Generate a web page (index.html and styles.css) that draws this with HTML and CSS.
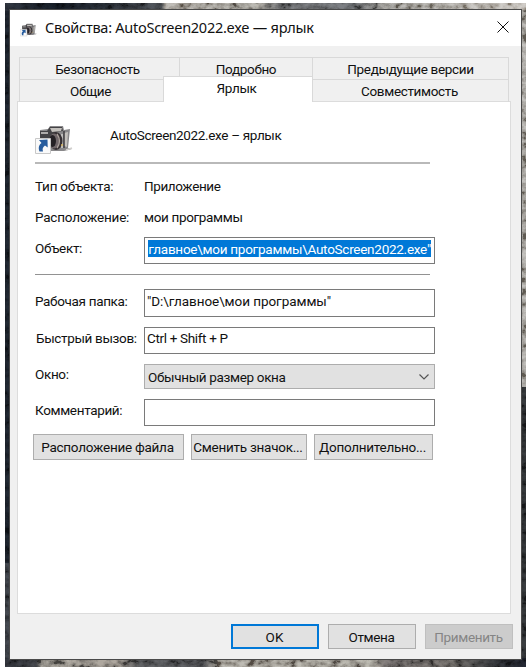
FILE: index.html
```html
<!DOCTYPE html>
<html lang="ru">
<head>
<meta charset="utf-8">
<title>Свойства: AutoScreen2022.exe — ярлык</title>
<link rel="stylesheet" href="styles.css">
</head>
<body>
<svg width="0" height="0" class="defs">
  <defs>
    <symbol id="camera" viewBox="0 0 38 30">
      <path d="M5 5 13 4 15 1h13l1 4 6-1-2 19 4 1-8 2H12L5 20z" fill="#89888a"/>
      <path d="M5 6h7l3-4h12l1 4-7 1-2 15H9L5 18z" fill="#444346"/>
      <path d="M15 3h12l-1 3-9 1zM29 8l4-1-1 15-3-1z" fill="#c3c0bc"/>
      <path d="M6 8h7M27 9v14M31 25l6-2" stroke="#d1cfcd" stroke-width="1.5"/>
      <ellipse cx="21" cy="16" rx="6.5" ry="9" fill="#363033"/>
      <ellipse cx="19" cy="16" rx="5" ry="7.500" fill="#70676a"/>
      <ellipse cx="17.500" cy="16" rx="3.500" ry="6" fill="#242125"/>
      <path d="M22 9q5 7 0 14" fill="none" stroke="#aaa09b" stroke-width="1.3"/>
      <path d="M29 6v17" stroke="#3f3d3f" stroke-width="1.500"/>
      <circle cx="27" cy="20" r="1" fill="#d9b75e"/>
      <path d="M.5 13.5h15v15H.5z" fill="#fafafa" stroke="#c8c8c8"/>
      <path d="m4 15 8.500-.5.2 8-2.700-2c-2 1.500-3 3-2 6H4.500c-1.500-4-.5-6.500 2-8.500z" fill="#285d9e"/>
    </symbol>
  </defs>
</svg>
<main class="desktop">
  <svg class="rock" width="521" height="664">
    <filter id="grain" x="0" y="0" width="100%" height="100%">
      <feTurbulence type="fractalNoise" baseFrequency=".12 .16" numOctaves="4" seed="8"/>
      <feColorMatrix values="2.2 0 0 0 -.62  2.2 0 0 0 -.62  2.2 0 0 0 -.62  0 0 0 0 1"/>
    </filter>
    <linearGradient id="top">
      <stop offset="0" stop-color="#22262d"/><stop offset=".1" stop-color="#121820"/>
      <stop offset=".23" stop-color="#292d33"/><stop offset=".3" stop-color="#3c3f43"/>
      <stop offset=".31" stop-color="#8d877f"/><stop offset=".48" stop-color="#85827c"/>
      <stop offset=".53" stop-color="#57585a"/><stop offset=".67" stop-color="#55575a"/>
      <stop offset=".75" stop-color="#8d8a84"/><stop offset="1" stop-color="#b0aaa2"/>
    </linearGradient>
    <linearGradient id="bottom">
      <stop offset="0" stop-color="#26282e"/><stop offset=".06" stop-color="#34363a"/>
      <stop offset=".07" stop-color="#7d7a74"/><stop offset=".22" stop-color="#77726c"/>
      <stop offset=".26" stop-color="#47484a"/><stop offset=".38" stop-color="#414245"/>
      <stop offset=".41" stop-color="#89847c"/><stop offset=".71" stop-color="#85817a"/>
      <stop offset=".73" stop-color="#5c5857"/><stop offset=".86" stop-color="#55524f"/>
      <stop offset=".94" stop-color="#292b2e"/><stop offset="1" stop-color="#191c25"/>
    </linearGradient>
    <path d="M0 0h521v664H0z" fill="#171c23"/>
    <path d="M0 0h521v8H0z" fill="url(#top)"/>
    <path d="M515 7h6v377h-6z" fill="#918e88"/>
    <path d="M515 384h6v272h-6z" fill="#282a2c"/>
    <path d="M0 560h8v96H0z" fill="#303338"/>
    <path d="M0 655h521v9H0z" fill="url(#bottom)"/>
    <path class="grain" d="M0 0h521v664H0z" filter="url(#grain)"/>
  </svg>
  <section class="dialog">
    <header class="titlebar">
      <svg class="app-icon"><use href="#camera"/></svg>
      <h1><span class="title-text">Свойства: AutoScreen2022.exe — ярлык</span></h1>
      <svg class="close" viewBox="0 0 12 12"><path d="m.5.5 11 11m0-11-11 11"/></svg>
    </header>
    <nav class="tabs">
      <div class="tab-row upper"><div><span>Безопасность</span></div><div><span>Подробно</span></div><div><span>Предыдущие версии</span></div></div>
      <div class="tab-row lower"><div><span>Общие</span></div><div class="active"><span>Ярлык</span></div><div><span>Совместимость</span></div></div>
    </nav>
    <div class="panel">
      <div class="summary"><svg class="file-icon"><use href="#camera"/></svg><span class="filename">AutoScreen2022.exe – ярлык</span></div>
      <div class="row type"><span>Тип объекта:</span><span class="value">Приложение</span></div>
      <div class="row location"><span>Расположение:</span><span class="value">мои программы</span></div>
      <div class="row target"><span>Объект:</span><div class="input"><span class="selection">главное\мои программы\AutoScreen2022.exe"</span></div></div>
      <hr>
      <div class="row folder"><span>Рабочая папка:</span><div class="input"><span>"D:\главное\мои программы"</span></div></div>
      <div class="row hotkey"><span>Быстрый вызов:</span><div class="input"><span>Ctrl + Shift + P</span></div></div>
      <div class="row window"><span>Окно:</span><div class="input select"><span>Обычный размер окна</span><svg viewBox="0 0 10 6"><path d="m.5.5 4.5 4.5L9.5.5"/></svg></div></div>
      <div class="row comment"><span>Комментарий:</span><div class="input"></div></div>
      <div class="actions"><div class="button"><span>Расположение файла</span></div><div class="button"><span>Сменить значок...</span></div><div class="button"><span>Дополнительно...</span></div></div>
    </div>
    <footer><div class="button primary"><span>OK</span></div><div class="button"><span>Отмена</span></div><div class="button disabled"><span>Применить</span></div></footer>
  </section>
</main>
</body>
</html>
```
FILE: styles.css
```css
* { box-sizing: border-box; }
body { margin: 0; background: #fff; color: #111; font: 13.5px/18px Roboto, "Liberation Sans", sans-serif; letter-spacing: -.34px; overflow: hidden; }
span { white-space: nowrap; }
.defs { position: absolute; }
.desktop { width: 521px; height: 664px; margin: 3px 0 0 5px; padding: 7px 0 0 5px; position: relative; }
.rock { position: absolute; left: 0; top: 0; isolation: isolate; }
.grain { mix-blend-mode: overlay; opacity: .45; }
.dialog { position: relative; width: 511px; height: 649px; background: #f0f0f0; box-shadow: 0 0 0 1px #4a4a4a; }
.titlebar { height: 36px; background: #fff; display: flex; align-items: center; padding: 0 12px 0 10px; }
.app-icon { width: 17px; height: 14px; margin-top: 3px; }
h1 { margin: -2px auto 0 8px; font: 14.5px/20px "Noto Sans", sans-serif; letter-spacing: -.26px; }
.close { width: 12px; height: 12px; margin-bottom: 2px; fill: none; stroke: #111; }
.tabs { height: 55px; padding: 11px 12px 0 9px; }
.tab-row { display: grid; height: 22px; }
.tab-row > div { border: 1px solid #d9d9d9; border-width: 1px 0 0 1px; display: flex; align-items: center; justify-content: center; }
.tab-row > div:last-child { border-right-width: 1px; }
.upper { grid-template-columns: 160px 133px 197px; }
.upper > div:first-child { padding-right: 4px; }
.lower { grid-template-columns: 144px 149px 197px; }
.lower > div { padding-right: 2px; }
.lower .active { background: #fff; margin-top: -3px; height: 26px; padding: 0 3px 4px 0; position: relative; }
.panel { margin: 0 10px 0 7px; height: 513px; background: #fff; border: 1px solid #dcdcdc; padding-left: 17px; }
.summary { width: 395px; height: 62px; border-bottom: 2px solid #b9b9b9; display: flex; align-items: flex-start; }
.file-icon { width: 38px; height: 30px; margin-top: 23px; }
.filename { margin: 24px 0 0 37px; }
.row { display: grid; grid-template-columns: 109px 291px; height: 27px; align-items: center; }
.row > span:first-child { margin-top: -5px; }
.type { height: 30px; margin-top: 8px; }
.location { height: 30px; }
.type > span:first-child, .type .value { margin-top: -2px; letter-spacing: -.4px; }
.type > span:first-child { letter-spacing: -.25px; }
.location > span:first-child { margin-top: -1px; letter-spacing: -.22px; }
.location .value { margin-top: -1px; }
.target { margin-top: 5px; }
.input { height: 100%; border: 1px solid #7a7a7a; padding: 3px 3px; line-height: 16px; }
.folder .input, .hotkey .input { padding-left: 2px; }
.folder .input { letter-spacing: -.07px; }
.hotkey .input { padding-top: 2px; }
.target .input { display: flex; justify-content: flex-end; padding-top: 2px; }
.selection { background: #0078d7; color: #fff; height: 17px; line-height: 18px; letter-spacing: -.26px; }
hr { width: 395px; margin: 10px 0 14px; border: 0; height: 1px; background: #929292; }
.folder { height: 28px; }
.hotkey { margin-top: 10px; }
.hotkey > span:first-child { padding-left: 1px; }
.window { height: 25px; margin-top: 10px; }
.select { background: #e1e1e1; border-color: #adadad; display: flex; align-items: center; justify-content: space-between; padding: 1px 5px 0 3px; }
.select svg { width: 10px; height: 6px; fill: none; stroke: #555; stroke-width: 1.2; }
.comment { margin-top: 10px; }
.actions { display: grid; grid-template-columns: 151px 116px 119px; margin: 8px 0 0 -2px; column-gap: 7px; letter-spacing: -.26px; }
.button { height: 26px; background: #e1e1e1; border: 1px solid #adadad; display: flex; align-items: center; justify-content: center; }
.actions .button { padding-right: 2px; }
footer { display: grid; grid-template-columns: 88px 88px 88px; column-gap: 9px; justify-content: end; padding: 10px 8px 0 0; }
footer .button { height: 25px; padding-right: 1px; }
.primary { border: 2px solid #0078d7; }
.primary span { letter-spacing: 0; }
.disabled { background: #ccc; border-color: #bfbfbf; color: #858585; }
```
